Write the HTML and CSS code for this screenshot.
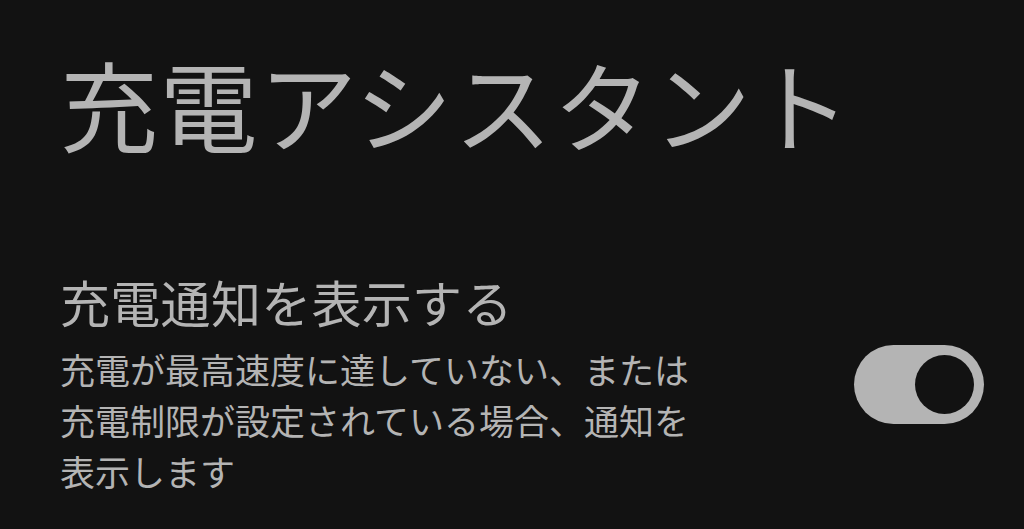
FILE: index.html
```html
<!DOCTYPE html>
<html lang="ja">
<head>
<meta charset="utf-8">
<link rel="stylesheet" href="styles.css">
</head>
<body>
<main class="page">
  <h1 class="title">充電アシスタント</h1>
  <section class="setting">
    <div class="setting-text">
      <div class="setting-label">充電通知を表示する</div>
      <div class="setting-desc">充電が最高速度に達していない、または<br>充電制限が設定されている場合、通知を<br>表示します</div>
    </div>
    <div class="toggle" role="switch" aria-checked="true"><span class="thumb"></span></div>
  </section>
</main>
</body>
</html>
```
FILE: styles.css
```css
html, body {
  margin: 0;
  padding: 0;
  background: #121212;
}
body {
  width: 1024px;
  height: 529px;
  overflow: hidden;
  font-family: "Noto Sans CJK JP", "Noto Sans", sans-serif;
  color: #b4b4b4;
}
.page {
  padding: 42px 0 0 60px;
}
.title {
  margin: 0;
  font-size: 98px;
  font-weight: 400;
  line-height: 120px;
  letter-spacing: 1.5px;
}
.setting {
  display: flex;
  align-items: center;
  margin-top: 108px;
}
.setting-text {
  flex: 1;
}
.setting-label {
  font-size: 50px;
  line-height: 62px;
  letter-spacing: 0.3px;
}
.setting-desc {
  margin-top: 11px;
  font-size: 35px;
  line-height: 51px;
}
.toggle {
  width: 130px;
  height: 79px;
  border-radius: 40px;
  background: #b4b4b4;
  margin: 2px 40px 0 0;
  display: flex;
  align-items: center;
  justify-content: flex-end;
  padding-right: 10px;
  box-sizing: border-box;
}
.thumb {
  width: 59px;
  height: 59px;
  border-radius: 50%;
  background: #121212;
}
```
